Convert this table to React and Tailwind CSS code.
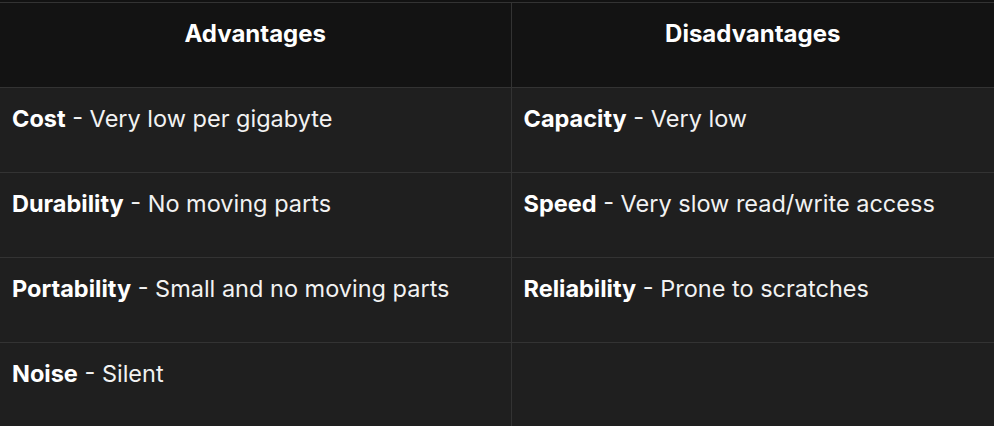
import React from 'react';

const rows = [
  [['Cost', 'Very low per gigabyte'], ['Capacity', 'Very low']],
  [['Durability', 'No moving parts'], ['Speed', 'Very slow read/write access']],
  [['Portability', 'Small and no moving parts'], ['Reliability', 'Prone to scratches']],
  [['Noise', 'Silent'], null],
];

function Cell({ item, last }) {
  return (
    <td className={`align-top px-3 pt-[14px] h-[85px] border-t border-[#333333] ${last ? '' : 'border-r'}`}>
      {item && (
        <p className="text-[23.5px] leading-[34px] text-[#f2f2f2]">
          <span className="font-bold text-white">{item[0]}</span> - {item[1]}
        </p>
      )}
    </td>
  );
}

export default function App() {
  return (
    <div className="w-[994px] h-[426px] overflow-hidden bg-[#121212] pt-[2px]" style={{ fontFamily: 'Inter, "Noto Sans", sans-serif' }}>
      <table className="w-[995px] border-collapse table-fixed border-t border-[#333333]">
        <colgroup>
          <col className="w-[511px]" />
          <col />
        </colgroup>
        <thead>
          <tr className="bg-[#131313]">
            <th className="h-[85px] align-top pt-[14px] text-[24px] leading-[34px] font-bold text-white border-r border-[#333333]">Advantages</th>
            <th className="h-[85px] align-top pt-[14px] text-[24px] leading-[34px] font-bold text-white border-r border-[#333333]">Disadvantages</th>
          </tr>
        </thead>
        <tbody className="bg-[#1f1f1f]">
          {rows.map((r, i) => (
            <tr key={i}>
              <Cell item={r[0]} />
              <Cell item={r[1]} last />
            </tr>
          ))}
        </tbody>
      </table>
    </div>
  );
}
